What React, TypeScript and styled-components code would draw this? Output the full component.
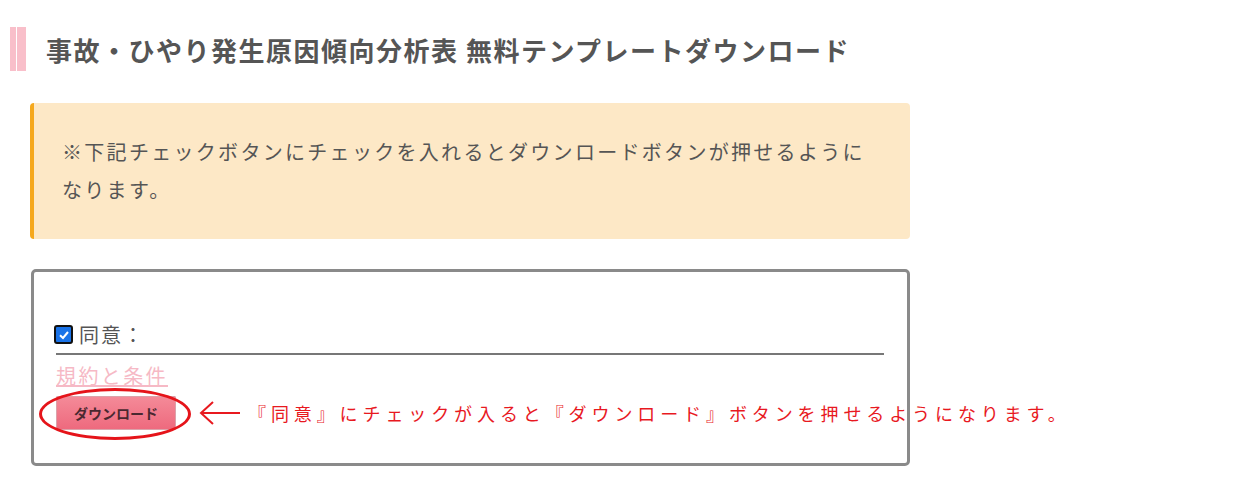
import styled, { createGlobalStyle } from "styled-components";

const Global = createGlobalStyle`
  body {
    margin: 0;
    background: #fff;
    font-family: "Noto Sans CJK JP", "Noto Sans", sans-serif;
    color: #555;
  }
`;

export default function App() {
  return (
    <Page>
      <Global />
      <Heading>
        <Bar />
        <h2>事故・ひやり発生原因傾向分析表 無料テンプレートダウンロード</h2>
      </Heading>
      <Notice>
        ※下記チェックボタンにチェックを入れるとダウンロードボタンが押せるようになります。
      </Notice>
      <FormBox>
        <AgreeRow>
          <CheckBox>
            <svg width="14" height="14" viewBox="0 0 14 14">
              <path
                d="M3 7.2 L6 10 L11 4"
                fill="none"
                stroke="#fff"
                strokeWidth="2"
              />
            </svg>
          </CheckBox>
          <span>同意：</span>
        </AgreeRow>
        <TermsLink href="#">規約と条件</TermsLink>
        <BtnRow>
          <DownloadBtn>ダウンロード</DownloadBtn>
          <Ellipse />
          <Note>
            <svg width="44" height="30" viewBox="0 0 44 30">
              <path
                d="M42 15 H4 M15 4 L3 15 L15 26"
                fill="none"
                stroke="#e8191f"
                strokeWidth="2"
              />
            </svg>
            <span>
              『同意』にチェックが入ると『ダウンロード』ボタンを押せるようになります。
            </span>
          </Note>
        </BtnRow>
      </FormBox>
    </Page>
  );
}

const Page = styled.div`
  width: 1236px;
  height: 500px;
  padding: 27px 0 0 10px;
  box-sizing: border-box;
  overflow: hidden;
`;

const Heading = styled.div`
  display: flex;
  align-items: center;
  gap: 20px;
  h2 {
    margin: 0;
    font-size: 26px;
    font-weight: 700;
    color: #555;
    letter-spacing: 1.5px;
  }
`;

const Bar = styled.div`
  width: 16px;
  height: 44px;
  background: linear-gradient(
    to right,
    #f9bfca 0 6px,
    #fff 6px 7px,
    #f9bfca 7px 16px
  );
`;

const Notice = styled.div`
  margin: 32px 0 0 20px;
  width: 880px;
  box-sizing: border-box;
  padding: 30px 33px 30px 28px;
  background: #fde8c6;
  border-left: 4px solid #f5a81d;
  border-radius: 4px;
  font-size: 20px;
  line-height: 38px;
  letter-spacing: 2.3px;
  color: #555;
`;

const FormBox = styled.div`
  margin: 30px 0 0 21px;
  width: 879px;
  height: 197px;
  border: 3px solid #8a8a8a;
  border-radius: 5px;
  padding: 48px 23px 0 20px;
  box-sizing: border-box;
  position: relative;
`;

const AgreeRow = styled.label`
  display: flex;
  align-items: center;
  gap: 6px;
  padding-bottom: 4px;
  border-bottom: 2px solid #777;
  margin-left: 2px;
  font-size: 20px;
  letter-spacing: 2px;
  color: #555;
`;

const CheckBox = styled.span`
  width: 19px;
  height: 19px;
  box-sizing: border-box;
  border: 2px solid #111;
  border-radius: 3px;
  background: #1a73e8;
  display: flex;
  align-items: center;
  justify-content: center;
  margin-left: -2px;
`;

const TermsLink = styled.a`
  display: inline-block;
  margin: 6px 0 0 2px;
  font-size: 20px;
  letter-spacing: 2.4px;
  color: #f6b9c5;
  text-decoration: underline;
  text-decoration-thickness: 2px;
`;

const BtnRow = styled.div`
  position: relative;
  margin-top: 6px;
  margin-left: 2px;
  display: flex;
  align-items: center;
`;

const DownloadBtn = styled.button`
  width: 120px;
  height: 34px;
  background: linear-gradient(#f48a98, #ee6a7e);
  border: 1px solid #dba2aa;
  border-radius: 1px;
  font-family: "Noto Sans CJK JP", sans-serif;
  font-size: 14px;
  font-weight: 700;
  color: #4a2830;
  cursor: pointer;
`;

const Ellipse = styled.div`
  position: absolute;
  left: -17px;
  top: -8px;
  width: 152px;
  height: 52px;
  border: 3px solid #e5141a;
  border-radius: 50%;
  box-sizing: border-box;
`;

const Note = styled.div`
  position: absolute;
  left: 142px;
  top: 0;
  height: 34px;
  display: flex;
  align-items: center;
  gap: 6px;
  white-space: nowrap;
  span {
    font-family: "Noto Sans CJK JP", sans-serif;
    font-size: 18px;
    letter-spacing: 4.9px;
    color: #e8191f;
  }
`;
